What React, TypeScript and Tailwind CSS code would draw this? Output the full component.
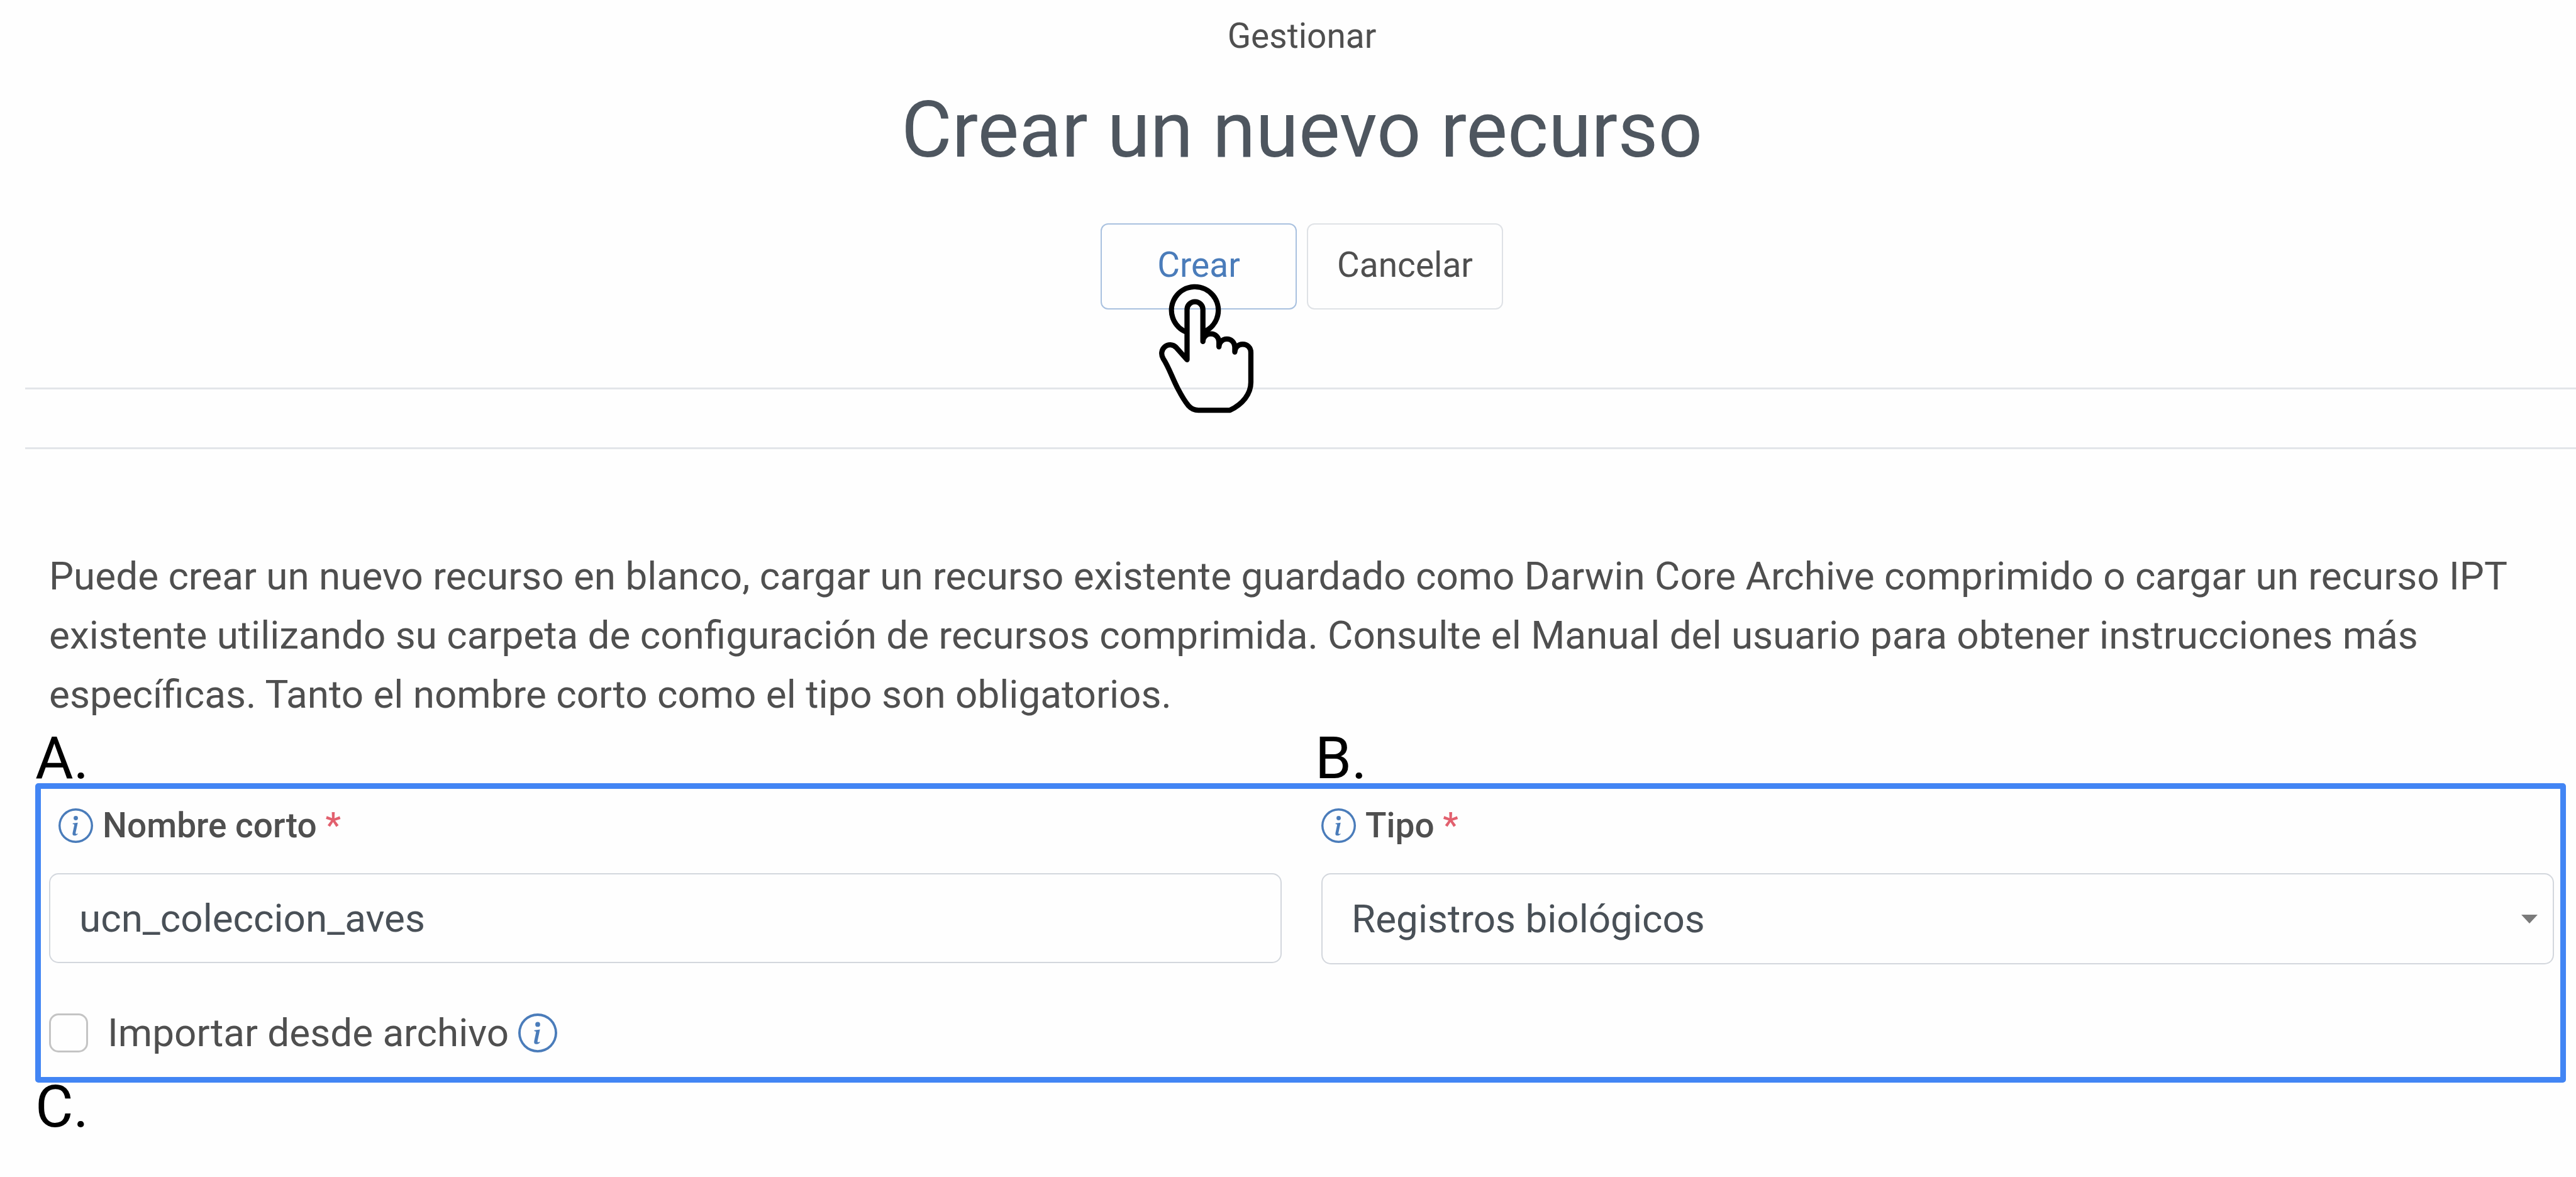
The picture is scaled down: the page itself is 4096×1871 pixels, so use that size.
import { useState } from "react";
import { BsInfoCircle } from "react-icons/bs";

function InfoButton({ label, className }: { label: string; className: string }) {
  return (
    <button type="button" aria-label={label} className="shrink-0 text-[#4a7cba]">
      <BsInfoCircle className={className} aria-hidden="true" />
    </button>
  );
}

function TapPointer() {
  return (
    <svg
      className="pointer-events-none absolute top-[96px] left-[90px] h-[206px] w-[154px]"
      viewBox="0 0 500 670"
      fill="none"
      stroke="#000"
      strokeWidth="27"
      strokeLinecap="round"
      strokeLinejoin="round"
      aria-hidden="true"
    >
      <path d="M154 251A121 121 0 1 1 245 247" strokeLinecap="butt" />
      <path d="M236 299V134a41 41 0 0 0-82 0V393L96 328C80 313 56 312 39 326C21 341 18 367 31 388C60 432 76 484 106 542C128 584 142 608 161 630C176 647 194 654 213 654H376C442 622 484 570 484 510V355c0-24-18-42-42-42s-41 18-41 40v-25c0-24-18-42-41-42s-41 18-41 40v-25c0-24-18-42-42-42s-41 18-41 40" />
    </svg>
  );
}

export default function App() {
  const [shortName, setShortName] = useState("ucn_coleccion_aves");
  const [kind, setKind] = useState("occurrence");
  const [fromFile, setFromFile] = useState(false);

  return (
    <div className="min-h-screen overflow-x-hidden bg-[#fefefe] font-['Roboto',sans-serif] text-[#4f4f4f]">
      <header className="flex flex-col items-center pt-4 pl-11 text-center">
        <p className="text-[55px] leading-[82px]">Gestionar</p>
        <h1 className="mt-[34px] text-[124px] leading-[150px] text-[#4e565f]">Crear un nuevo recurso</h1>
        <div className="mt-[73px] flex gap-4 text-[55px]">
          <div className="relative">
            <button
              type="button"
              className="h-[137px] w-[312px] rounded-xl border-2 border-[#a9c1df] pb-1 text-[#4a7cba]"
            >
              Crear
            </button>
            <TapPointer />
          </div>
          <button type="button" className="h-[137px] w-[312px] rounded-xl border-2 border-[#dfe2e6] pb-1">
            Cancelar
          </button>
        </div>
      </header>

      <hr className="mt-[124px] ml-10 border-t-3 border-[#e3e5e9]" />
      <hr className="mt-[92px] ml-10 border-t-3 border-[#e3e5e9]" />

      <main className="pt-[155px]">
        <p className="mr-9 ml-[78px] text-[62px] leading-[94px]">
          Puede crear un nuevo recurso en blanco, cargar un recurso existente guardado como Darwin Core Archive
          comprimido o cargar un recurso IPT existente utilizando su carpeta de configuración de recursos comprimida.
          Consulte el Manual del usuario para obtener instrucciones más específicas. Tanto el nombre corto como el tipo
          son obligatorios.
        </p>

        <div className="mr-4 ml-14 grid grid-cols-2 gap-[46px] pt-4 text-[93px] leading-[78px] text-black">
          <span>A.</span>
          <span>B.</span>
        </div>

        <form className="mr-4 ml-14 rounded-[5px] border-9 border-[#4285f4] pt-[17px] pr-[10px] pb-[23px] pl-[13px]">
          <div className="grid grid-cols-2 gap-[63px]">
            <div>
              <div className="flex items-center gap-[15px] pl-[15px] text-[55px] leading-[82px] font-medium">
                <InfoButton label="Ayuda sobre el nombre corto" className="size-[55px]" />
                <label htmlFor="shortname">
                  Nombre corto <span className="text-[#e2606e]">*</span>
                </label>
              </div>
              <input
                id="shortname"
                type="text"
                value={shortName}
                onChange={(event) => setShortName(event.target.value)}
                className="mt-[35px] h-[143px] w-full rounded-[15px] border-2 border-[#d3d7dd] bg-transparent px-[46px] text-[62px] text-[#495057]"
              />
            </div>
            <div>
              <div className="flex items-center gap-[15px] text-[55px] leading-[82px] font-medium">
                <InfoButton label="Ayuda sobre el tipo" className="size-[55px]" />
                <label htmlFor="type">
                  Tipo <span className="text-[#e2606e]">*</span>
                </label>
              </div>
              <div className="relative mt-[35px]">
                <select
                  id="type"
                  value={kind}
                  onChange={(event) => setKind(event.target.value)}
                  className="block h-[145px] w-full appearance-none rounded-[15px] border-2 border-[#d3d7dd] bg-transparent px-[46px] text-[62px] text-[#495057]"
                >
                  <option value="occurrence">Registros biológicos</option>
                </select>
                <svg
                  className="pointer-events-none absolute top-[66px] right-[26px] h-[14px] w-[26px]"
                  viewBox="0 0 26 14"
                  aria-hidden="true"
                >
                  <path d="M0 0H26L13 14Z" fill="#7a7a7a" />
                </svg>
              </div>
            </div>
          </div>

          <div className="mt-[62px] flex items-center text-[62px] leading-[94px]">
            <input
              id="import"
              type="checkbox"
              checked={fromFile}
              onChange={(event) => setFromFile(event.target.checked)}
              className="size-[62px] appearance-none rounded-[15px] border-3 border-[#c4c4c4] checked:bg-[#4a7cba]"
            />
            <label htmlFor="import" className="mr-[15px] ml-[31px]">
              Importar desde archivo
            </label>
            <InfoButton label="Ayuda sobre la importación" className="size-[62px]" />
          </div>
        </form>

        <p className="ml-14 text-[93px] leading-[78px] text-black">C.</p>
      </main>
    </div>
  );
}
